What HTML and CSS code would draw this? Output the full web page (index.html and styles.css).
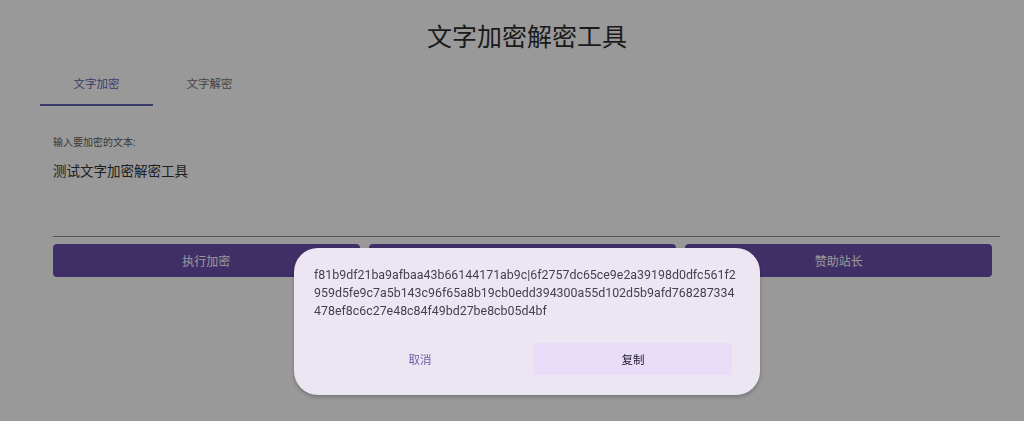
FILE: index.html
```html
<!DOCTYPE html>
<html lang="zh-CN">
<head>
<meta charset="utf-8">
<title>文字加密解密工具</title>
<link rel="stylesheet" href="styles.css">
</head>
<body>
<div class="page">
  <h1 class="title">文字加密解密工具</h1>
  <div class="tabs">
    <div class="tab active">文字加密</div>
    <div class="tab">文字解密</div>
  </div>
  <div class="panel">
    <div class="field">
      <label class="field-label">输入要加密的文本:</label>
      <div class="field-value">测试文字加密解密工具</div>
    </div>
    <div class="actions">
      <button class="btn">执行加密</button>
      <button class="btn">复制结果</button>
      <button class="btn">赞助站长</button>
    </div>
  </div>
</div>
<div class="backdrop">
  <div class="dialog">
    <div class="dialog-text">f81b9df21ba9afbaa43b66144171ab9c|6f2757dc65ce9e2a39198d0dfc561f2959d5fe9c7a5b143c96f65a8b19cb0edd394300a55d102d5b9afd768287334478ef8c6c27e48c84f49bd27be8cb05d4bf</div>
    <div class="dialog-actions">
      <button class="dbtn cancel">取消</button>
      <button class="dbtn copy">复制</button>
    </div>
  </div>
</div>
</body>
</html>
```
FILE: styles.css
```css
* { box-sizing: border-box; }
html, body { margin: 0; padding: 0; }
body {
  background: #ffffff;
  font-family: Roboto, "Noto Sans CJK SC", sans-serif;
  width: 1024px;
  height: 421px;
  overflow: hidden;
}
.page {
  padding-top: 20px;
}
.title {
  margin: 0;
  padding-left: 30px;
  text-align: center;
  font-size: 25px;
  font-weight: 400;
  line-height: 35px;
  color: #2e2e2e;
}
.tabs {
  display: flex;
  margin: 11px 0 0 40px;
}
.tab {
  width: 113px;
  height: 40px;
  padding-top: 10px;
  text-align: center;
  font-size: 11.5px;
  line-height: 16px;
  color: #727272;
  border-bottom: 2px solid transparent;
}
.tab.active {
  color: #6266b4;
  border-bottom-color: #6266b4;
}
.panel {
  padding: 30px 32px 0 53px;
}
.field {
  margin-right: -8px;
  border-bottom: 1px solid #8e8e8e;
  height: 101px;
}
.field-label {
  display: block;
  font-size: 10px;
  line-height: 14px;
  color: #5e5e5e;
}
.field-value {
  margin-top: 11px;
  font-size: 13.5px;
  line-height: 20px;
  color: #333333;
}
.actions {
  display: grid;
  grid-template-columns: 1fr 1fr 1fr;
  gap: 9.5px;
  margin-top: 7px;
}
.btn {
  height: 33px;
  border: none;
  border-radius: 4px;
  background: #6b4fab;
  color: #ffffff;
  font-family: inherit;
  font-size: 12px;
}
.backdrop {
  position: fixed;
  inset: 0;
  background: rgba(0, 0, 0, 0.4);
}
.dialog {
  position: absolute;
  left: 294px;
  top: 248px;
  width: 466px;
  height: 147px;
  background: #ece6f3;
  border-radius: 24px;
  box-shadow: 0 2px 4px rgba(0, 0, 0, 0.25);
  padding: 18px 20px 20px 20px;
  display: flex;
  flex-direction: column;
}
.dialog-text {
  font-size: 12.4px;
  line-height: 18px;
  color: #443f4b;
  word-break: break-all;
}
.dialog-actions {
  margin-top: auto;
  display: flex;
  gap: 8px;
  padding-right: 8px;
}
.dbtn {
  height: 32px;
  border: none;
  border-radius: 2px;
  font-family: inherit;
  font-size: 11.5px;
  background: transparent;
}
.dbtn.cancel {
  flex: 1;
  color: #6d5ca4;
}
.dbtn.copy {
  width: 198px;
  background: #e8dcf8;
  color: #1d1a2a;
}
```
